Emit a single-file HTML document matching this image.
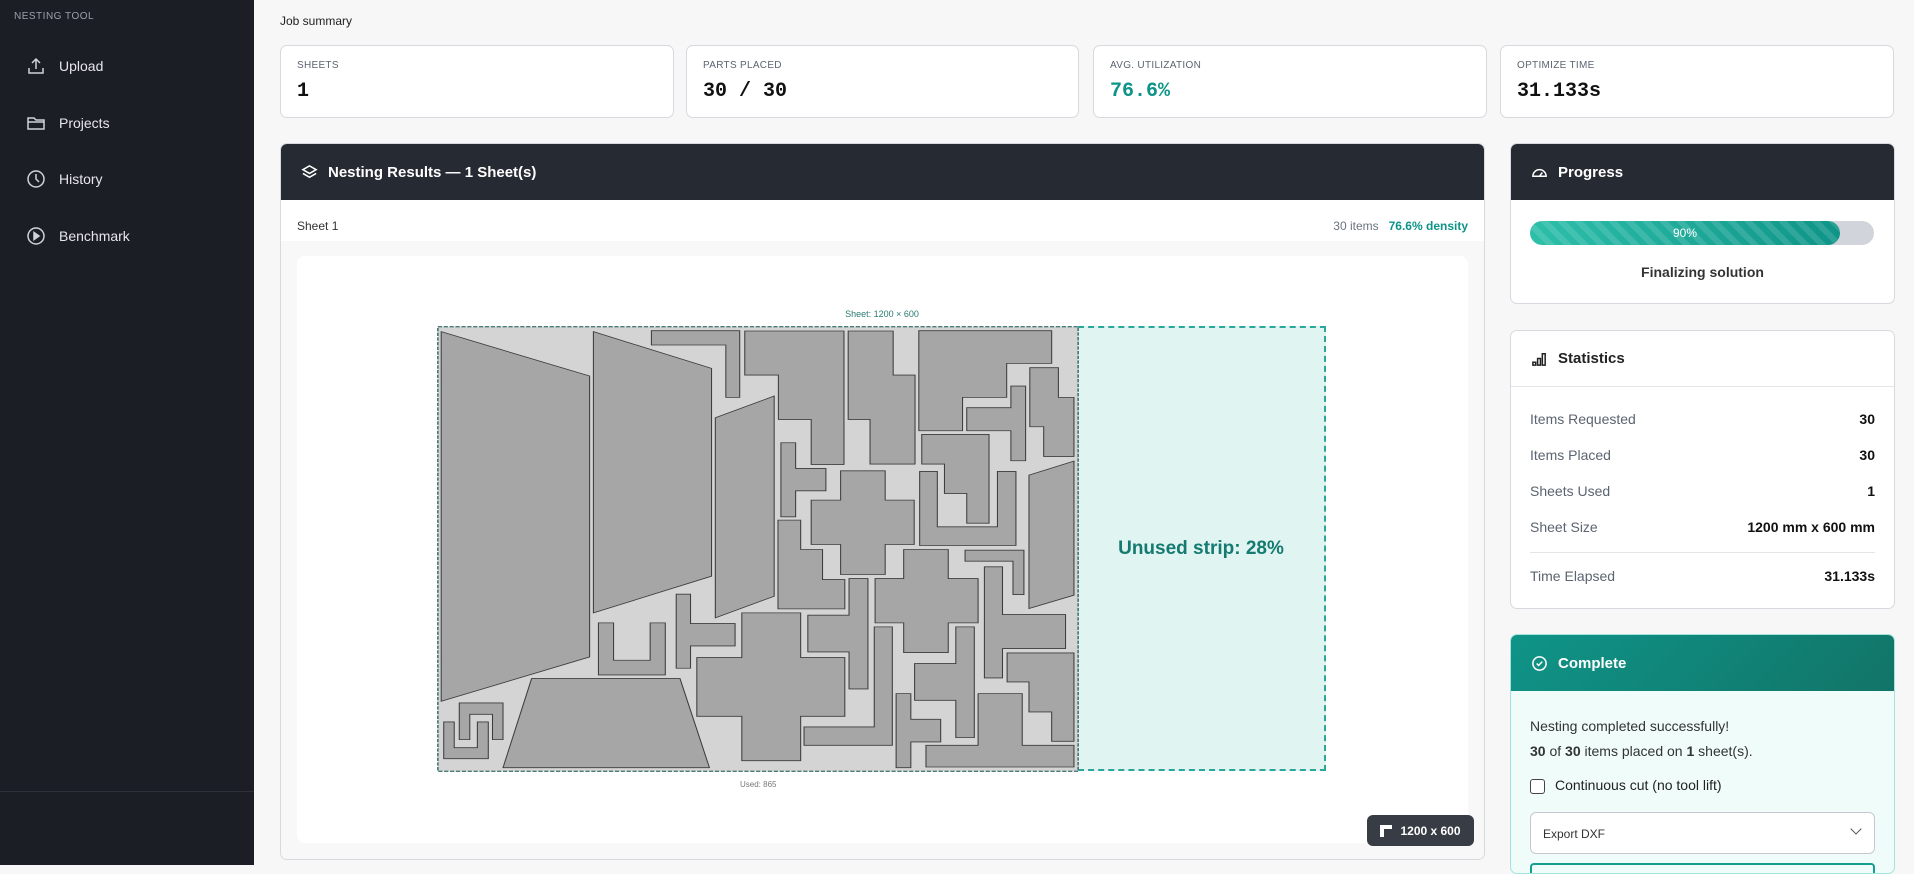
<!DOCTYPE html>
<html><head><meta charset="utf-8"><style>
*{box-sizing:border-box;margin:0;padding:0}
body{width:1914px;height:865px;overflow:hidden;background:#f7f7f8;font-family:"Liberation Sans",sans-serif;position:relative;color:#1f2937}
.sb{position:absolute;left:0;top:0;width:254px;height:865px;background:#1b1e25}
.sb .t{position:absolute;left:14px;top:11px;font-size:10px;color:#9aa0aa;letter-spacing:.5px}
.nav{position:absolute;left:26px;color:#e5e7eb;font-size:14px;display:flex;align-items:center;gap:13px}
.nav svg{width:20px;height:20px;fill:none;stroke:#cfd3da;stroke-width:1.5}
.sb .sep{position:absolute;left:0;right:0;top:791px;border-top:1px solid #2c3038}
.abs{position:absolute}
.card{position:absolute;top:45px;height:73px;background:#fff;border:1px solid #d6d9de;border-radius:7px}
.card .l{position:absolute;left:16px;top:14px;font-size:10px;color:#5b6470;letter-spacing:.3px}
.card .v{position:absolute;left:16px;top:34px;font-family:"Liberation Mono",monospace;font-weight:bold;font-size:20px;color:#111}
.panel{position:absolute;background:#fff;border:1px solid #d6d9de;border-radius:7px;overflow:hidden}
.hd{position:absolute;left:0;right:0;top:0;height:56px;background:#262a33;color:#fff;font-weight:bold;font-size:15px;display:flex;align-items:center;padding-left:20px;gap:10px}
.hd svg{width:17px;height:17px;fill:none;stroke:#fff;stroke-width:1.6}
.row{position:absolute;left:19px;right:19px;font-size:14px;color:#5b6470;display:flex;justify-content:space-between}
.row b{color:#111}
</style></head><body>
<div class="sb">
<div class="t">NESTING TOOL</div>
<div class="nav" style="top:56px"><svg viewBox="0 0 20 20"><path d="M3 12v5h14v-5M10 3v10M6 7l4-4 4 4"/></svg>Upload</div>
<div class="nav" style="top:113px"><svg viewBox="0 0 20 20"><path d="M2 5h6l2 2h8v9H2z M2 9h16"/></svg>Projects</div>
<div class="nav" style="top:169px"><svg viewBox="0 0 20 20"><circle cx="10" cy="10" r="8"/><path d="M10 5v5l3 3"/></svg>History</div>
<div class="nav" style="top:226px"><svg viewBox="0 0 20 20"><circle cx="10" cy="10" r="8"/><path d="M8 6.5l5 3.5-5 3.5z" fill="#cfd3da"/></svg>Benchmark</div>
<div class="sep"></div>
</div>

<div class="abs" style="left:280px;top:14px;font-size:12px;color:#222">Job summary</div>
<div class="card" style="left:280px;width:394px"><div class="l">SHEETS</div><div class="v">1</div></div>
<div class="card" style="left:686px;width:393px"><div class="l">PARTS PLACED</div><div class="v">30 / 30</div></div>
<div class="card" style="left:1093px;width:394px"><div class="l">AVG. UTILIZATION</div><div class="v" style="color:#0d9488">76.6%</div></div>
<div class="card" style="left:1500px;width:394px"><div class="l">OPTIMIZE TIME</div><div class="v">31.133s</div></div>

<div class="panel" style="left:280px;top:143px;width:1205px;height:717px">
<div class="hd"><svg viewBox="0 0 18 18"><path d="M9 2l7 4-7 4-7-4z M2 10l7 4 7-4"/></svg>Nesting Results — 1 Sheet(s)</div>
<div class="abs" style="left:16px;top:75px;font-size:12px;color:#333">Sheet 1</div>
<div class="abs" style="right:16px;top:75px;font-size:12px;color:#6b7280">30 items&nbsp;&nbsp;&nbsp;<b style="color:#0d9488">76.6% density</b></div>
<div class="abs" style="left:0;right:0;top:97px;bottom:0;background:#f8f8f8"></div>
<div class="abs" style="left:16px;right:16px;top:112px;height:587px;background:#fff;border-radius:8px"></div>
<div class="abs" style="left:1086px;top:671px;width:107px;height:31px;background:#383c44;border-radius:6px;color:#fff;font-size:12px;font-weight:bold;display:flex;align-items:center;justify-content:center;gap:8px"><span style="display:inline-block;width:12px;height:12px;border-left:4px solid #fff;border-top:4px solid #fff"></span>1200 x 600</div>
</div>

<div class="abs" style="left:438px;top:309px;width:888px;text-align:center;font-size:9px;color:#2b7a74">Sheet: 1200 × 600</div>
<div class="abs" style="left:1078px;top:326px;width:248px;height:445px;background:#e0f4f2;border:2px dashed #2aa69a;border-left:none;display:flex;align-items:center;justify-content:center;color:#157a70;font-size:19px;font-weight:bold">Unused strip: 28%</div>
<svg class="abs" style="left:437px;top:326px" width="642" height="446" viewBox="40 78 1527 1337" preserveAspectRatio="none">
<rect x="42" y="80" width="1523" height="1333" fill="#d4d4d4" stroke="#4b7c78" stroke-width="4" stroke-dasharray="10 4"/>
<g fill="#a6a6a6" stroke="#3d3d3d" stroke-width="2.5">
<path d="M50,95L403,228L403,1070L50,1203Z"/>
<path d="M412,95L693,205L693,828L412,938Z"/>
<path d="M550,92L760,92L760,292L727,292L727,135L550,135Z"/>
<path d="M772,93L1008,93L1008,493L930,493L930,358L852,358L852,225L772,225Z"/>
<path d="M1018,93L1125,93L1125,225L1177,225L1177,492L1070,492L1070,358L1018,358Z"/>
<path d="M1186,92L1502,92L1502,190L1395,190L1395,292L1290,292L1290,392L1186,392Z"/>
<path d="M1300,323L1405,323L1405,258L1440,258L1440,482L1405,482L1405,392L1300,392Z"/>
<path d="M1450,203L1518,203L1518,292L1555,292L1555,469L1483,469L1483,380L1450,380Z"/>
<path d="M1448,525L1555,483L1555,885L1448,925Z"/>
<path d="M702,353L842,288L842,888L702,953Z"/>
<path d="M858,428L893,428L893,505L965,505L965,572L893,572L893,650L858,650Z"/>
<path d="M1000,512L1106,512L1106,600L1175,600L1175,733L1106,733L1106,823L1000,823L1000,733L930,733L930,600L1000,600Z"/>
<path d="M1193,403L1353,403L1353,669L1300,669L1300,580L1247,580L1247,492L1193,492Z"/>
<path d="M1188,514L1230,514L1230,680L1373,680L1373,514L1417,514L1417,736L1188,736Z"/>
<path d="M851,660L905,660L905,748L957,748L957,838L1010,838L1010,926L851,926Z"/>
<path d="M1296,750L1436,750L1436,883L1410,883L1410,783L1296,783Z"/>
<path d="M1150,748L1256,748L1256,835L1327,835L1327,968L1256,968L1256,1057L1150,1057L1150,968L1082,968L1082,835L1150,835Z"/>
<path d="M1342,800L1385,800L1385,943L1535,943L1535,1045L1385,1045L1385,1133L1342,1133Z"/>
<path d="M922,945L1020,945L1020,835L1065,835L1065,1166L1020,1166L1020,1055L922,1055Z"/>
<path d="M765,938L905,938L905,1072L1010,1072L1010,1248L905,1248L905,1381L765,1381L765,1248L658,1248L658,1072L765,1072Z"/>
<path d="M609,882L643,882L643,970L749,970L749,1037L643,1037L643,1104L609,1104Z"/>
<path d="M424,968L460,968L460,1080L547,1080L547,968L583,968L583,1124L424,1124Z"/>
<path d="M265,1135L618,1135L688,1402L197,1402Z"/>
<path d="M913,1280L1080,1280L1080,980L1123,980L1123,1335L913,1335Z"/>
<path d="M1176,1090L1274,1090L1274,980L1318,980L1318,1312L1274,1312L1274,1200L1176,1200Z"/>
<path d="M1396,1058L1555,1058L1555,1323L1502,1323L1502,1235L1448,1235L1448,1145L1396,1145Z"/>
<path d="M1132,1180L1167,1180L1167,1257L1238,1257L1238,1325L1167,1325L1167,1402L1132,1402Z"/>
<path d="M1203,1335L1327,1335L1327,1180L1432,1180L1432,1335L1555,1335L1555,1400L1203,1400Z"/>
<path d="M93,1208L197,1208L197,1318L172,1318L172,1242L118,1242L118,1318L93,1318Z"/>
<path d="M56,1265L81,1265L81,1342L136,1342L136,1265L162,1265L162,1375L56,1375Z"/>
</g>
</svg>
<div class="abs" style="left:740px;top:780px;font-size:8px;color:#777">Used: 865</div>

<div class="panel" style="left:1510px;top:143px;width:385px;height:161px">
<div class="hd"><svg viewBox="0 0 18 18"><path d="M2 13a7 7 0 1 1 14 0z M9 13l3-4"/></svg>Progress</div>
<div class="abs" style="left:19px;top:77px;width:344px;height:24px;background:#d1d5db;border-radius:12px;overflow:hidden">
<div style="width:310px;height:24px;border-radius:12px;background:repeating-linear-gradient(45deg,rgba(255,255,255,.12) 0 6px,transparent 6px 12px),linear-gradient(90deg,#2dbfaa,#0f9488);color:#fff;font-size:12px;text-align:center;line-height:24px">90%</div></div>
<div class="abs" style="left:0;right:0;top:120px;text-align:center;font-size:14px;font-weight:bold;color:#333">Finalizing solution</div>
</div>

<div class="panel" style="left:1510px;top:330px;width:385px;height:279px">
<div class="hd" style="background:#fff;color:#222;border-bottom:1px solid #e3e5e8"><svg viewBox="0 0 18 18" style="stroke:#222"><path d="M2 13h3v3H2z M7 9h3v7H7z M12 4h3v12h-3z"/></svg>Statistics</div>
<div class="row" style="top:80px"><span>Items Requested</span><b>30</b></div>
<div class="row" style="top:116px"><span>Items Placed</span><b>30</b></div>
<div class="row" style="top:152px"><span>Sheets Used</span><b>1</b></div>
<div class="row" style="top:188px"><span>Sheet Size</span><b>1200 mm x 600 mm</b></div>
<div class="abs" style="left:19px;right:19px;top:221px;border-top:1px solid #e3e5e8"></div>
<div class="row" style="top:237px"><span>Time Elapsed</span><b>31.133s</b></div>
</div>

<div class="panel" style="left:1510px;top:634px;width:385px;height:240px;background:#effcf9;border-color:#a3e4da">
<div class="hd" style="background:linear-gradient(135deg,#0f9488,#127468)"><svg viewBox="0 0 18 18"><circle cx="9" cy="9" r="7"/><path d="M6 9l2 2 4-4"/></svg>Complete</div>
<div class="abs" style="left:19px;top:79px;font-size:14px;color:#333;line-height:25px">Nesting completed successfully!<br><b>30</b> of <b>30</b> items placed on <b>1</b> sheet(s).</div>
<div class="abs" style="left:19px;top:144px;width:15px;height:15px;border:1.5px solid #444;border-radius:3px;background:#fff"></div>
<div class="abs" style="left:44px;top:142px;font-size:14px;color:#222">Continuous cut (no tool lift)</div>
<div class="abs" style="left:19px;top:177px;width:345px;height:42px;background:#fff;border:1px solid #c5c9cf;border-radius:6px;font-size:12px;color:#333;padding:14px 12px">Export DXF<span style="position:absolute;right:14px;top:12px;width:8px;height:8px;border-right:1.5px solid #555;border-bottom:1.5px solid #555;transform:rotate(45deg)"></span></div>
<div class="abs" style="left:19px;top:228px;width:345px;height:20px;border:2px solid #14a08f;border-radius:4px"></div>
</div>
</body></html>
